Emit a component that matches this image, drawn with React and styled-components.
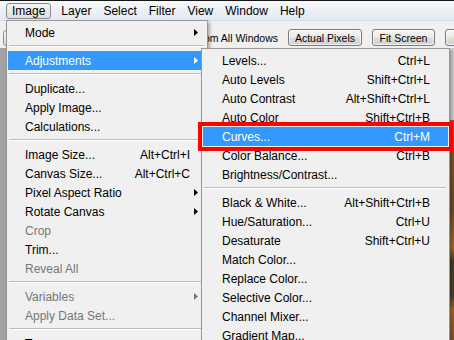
import React from 'react';
import styled, { createGlobalStyle } from 'styled-components';

const Global = createGlobalStyle`
  html, body { margin: 0; padding: 0; background: #a3a3a3; }
  body { font-family: "Liberation Sans", Arial, sans-serif; }
`;

const Window = styled.div`
  position: relative;
  width: 454px;
  height: 340px;
  overflow: hidden;
  display: flex;
  flex-direction: column;
  box-sizing: border-box;
  border-top: 1px solid #151515;
  background: #a3a3a3;
`;

const MenuBar = styled.div`
  height: 19px;
  flex: 0 0 auto;
  display: flex;
  align-items: flex-start;
  padding-left: 6px;
  background: linear-gradient(#f6f8fb, #e3e9f2);
  font-size: 12px;
  color: #000;
`;

const MenuTitle = styled.div`
  height: 16px;
  margin-top: 2px;
  box-sizing: border-box;
  display: flex;
  align-items: center;
  padding: 0 5px;
  border: 1px solid ${(p) => (p.$open ? '#858a91' : 'transparent')};
  border-radius: 3px;
  background: ${(p) => (p.$open ? 'linear-gradient(#f4f4f4, #dedede)' : 'transparent')};

  &:first-child {
    margin-right: 4px;
  }
`;

const Toolbar = styled.div`
  height: 28px;
  flex: 0 0 auto;
  box-sizing: border-box;
  display: flex;
  align-items: flex-start;
  gap: 10px;
  padding-top: 8px;
  border-top: 1px solid #d8dde5;
  background: #f0f0f0;
  font-size: 10.5px;
  color: #000;
  white-space: nowrap;
`;

const LeadControl = styled.div`
  flex: 0 0 40px;
  height: 16px;
  margin-left: 3px;
  margin-top: 1px;
  box-sizing: border-box;
  border: 1px solid #8e8e8e;
  border-radius: 3px;
  background: linear-gradient(#f6f6f6, #dcdcdc);
`;

const ZoomOption = styled.label`
  flex: 0 0 225px;
  height: 17px;
  display: flex;
  align-items: center;
  justify-content: flex-end;
  gap: 4px;
`;

const Check = styled.span`
  width: 11px;
  height: 11px;
  box-sizing: border-box;
  border: 1px solid #8e8f8f;
  background: #fff;
`;

const ToolButton = styled.div`
  flex: 0 0 ${(p) => p.$w}px;
  height: 17px;
  box-sizing: border-box;
  display: flex;
  align-items: center;
  justify-content: center;
  border: 1px solid #7a7a7a;
  border-radius: 3px;
  background: linear-gradient(#f4f4f4 0%, #ebebeb 48%, #dddddd 52%, #d2d2d2 100%);
  box-shadow: inset 0 0 0 1px rgba(255, 255, 255, 0.7);
`;

const Workspace = styled.div`
  flex: 1 1 auto;
  display: flex;
  justify-content: flex-end;
  background: #a3a3a3;
`;

const DocCanvas = styled.div`
  width: 160px;
  display: flex;
  flex-direction: column;
`;

const DocTop = styled.div`
  height: 72px;
  background: #cfcfcf;
`;

const DocImage = styled.div`
  flex: 1;
  background: linear-gradient(
    #8a5a2c 0%,
    #6e4a26 40%,
    #a66a2d 58%,
    #4a3d23 64%,
    #4d4024 80%,
    #a4672b 86%,
    #84552a 100%
  );
`;

const Menu = styled.div`
  position: absolute;
  left: ${(p) => p.$x}px;
  top: ${(p) => p.$y}px;
  width: ${(p) => p.$w}px;
  box-sizing: border-box;
  padding: 2px 1px;
  border: 1px solid #979797;
  background: #f0f0f0;
  box-shadow: 2px 2px 3px rgba(0, 0, 0, 0.28);
  font-size: 12px;
  z-index: ${(p) => p.$z};
`;

const Item = styled.div`
  height: 19px;
  display: grid;
  grid-template-columns: 1fr auto ${(p) => p.$arrowCol}px;
  align-items: center;
  padding-left: ${(p) => p.$indent}px;
  color: ${(p) => (p.$active ? '#fff' : p.$disabled ? '#767676' : '#000')};
  background: ${(p) => (p.$active ? '#3399ff' : 'transparent')};
  white-space: nowrap;
`;

const Shortcut = styled.span`
  text-align: right;
`;

const ArrowCell = styled.span`
  display: flex;
  align-items: center;
  padding-left: 4px;
`;

const Separator = styled.div`
  height: 9px;
  margin: 0 2px 0 1px;
  background: linear-gradient(
    to bottom,
    transparent 3px,
    #bcbcbc 3px,
    #bcbcbc 4px,
    #ffffff 4px,
    #ffffff 5px,
    transparent 5px
  );
`;

const Highlight = styled.div`
  position: absolute;
  left: 198px;
  top: 121px;
  width: 255px;
  height: 29px;
  box-sizing: border-box;
  border: 4px solid #ff0000;
  z-index: 5;
`;

const Arrow = () => (
  <svg width="4" height="7" viewBox="0 0 4 7">
    <polygon points="0,0 4,3.5 0,7" fill="currentColor" />
  </svg>
);

const imageMenu = [
  { label: 'Mode', sub: true },
  'sep',
  { label: 'Adjustments', sub: true, active: true },
  'sep',
  { label: 'Duplicate...' },
  { label: 'Apply Image...' },
  { label: 'Calculations...' },
  'sep',
  { label: 'Image Size...', key: 'Alt+Ctrl+I' },
  { label: 'Canvas Size...', key: 'Alt+Ctrl+C' },
  { label: 'Pixel Aspect Ratio', sub: true },
  { label: 'Rotate Canvas', sub: true },
  { label: 'Crop', disabled: true },
  { label: 'Trim...' },
  { label: 'Reveal All', disabled: true },
  'sep',
  { label: 'Variables', sub: true, disabled: true },
  { label: 'Apply Data Set...', disabled: true },
  'sep',
  { label: 'Trap...' },
];

const adjustMenu = [
  { label: 'Levels...', key: 'Ctrl+L' },
  { label: 'Auto Levels', key: 'Shift+Ctrl+L' },
  { label: 'Auto Contrast', key: 'Alt+Shift+Ctrl+L' },
  { label: 'Auto Color', key: 'Shift+Ctrl+B' },
  { label: 'Curves...', key: 'Ctrl+M', active: true },
  { label: 'Color Balance...', key: 'Ctrl+B' },
  { label: 'Brightness/Contrast...' },
  'sep',
  { label: 'Black & White...', key: 'Alt+Shift+Ctrl+B' },
  { label: 'Hue/Saturation...', key: 'Ctrl+U' },
  { label: 'Desaturate', key: 'Shift+Ctrl+U' },
  { label: 'Match Color...' },
  { label: 'Replace Color...' },
  { label: 'Selective Color...' },
  { label: 'Channel Mixer...' },
  { label: 'Gradient Map...' },
  { label: 'Photo Filter...' },
];

const renderItems = (items, indent, arrowCol) =>
  items.map((it, i) =>
    it === 'sep' ? (
      <Separator key={i} />
    ) : (
      <Item
        key={i}
        $indent={indent}
        $arrowCol={arrowCol}
        $active={it.active}
        $disabled={it.disabled}
      >
        <span>{it.label}</span>
        <Shortcut>{it.key || ''}</Shortcut>
        <ArrowCell>{it.sub ? <Arrow /> : null}</ArrowCell>
      </Item>
    )
  );

export default function App() {
  return (
    <>
      <Global />
      <Window>
        <MenuBar>
          <MenuTitle $open>Image</MenuTitle>
          <MenuTitle>Layer</MenuTitle>
          <MenuTitle>Select</MenuTitle>
          <MenuTitle>Filter</MenuTitle>
          <MenuTitle>View</MenuTitle>
          <MenuTitle>Window</MenuTitle>
          <MenuTitle>Help</MenuTitle>
        </MenuBar>
        <Toolbar>
          <LeadControl />
          <ZoomOption>
            <Check />
            Zoom All Windows
          </ZoomOption>
          <ToolButton $w={74}>Actual Pixels</ToolButton>
          <ToolButton $w={63}>Fit Screen</ToolButton>
          <ToolButton $w={62}>Print Size</ToolButton>
        </Toolbar>
        <Workspace>
          <DocCanvas>
            <DocTop />
            <DocImage />
          </DocCanvas>
        </Workspace>

        <Menu $x={6} $y={19} $w={202} $z={2}>
          {renderItems(imageMenu, 17, 16)}
        </Menu>
        <Menu $x={201} $y={47} $w={249} $z={3}>
          {renderItems(adjustMenu, 19, 18)}
        </Menu>
        <Highlight />
      </Window>
    </>
  );
}
